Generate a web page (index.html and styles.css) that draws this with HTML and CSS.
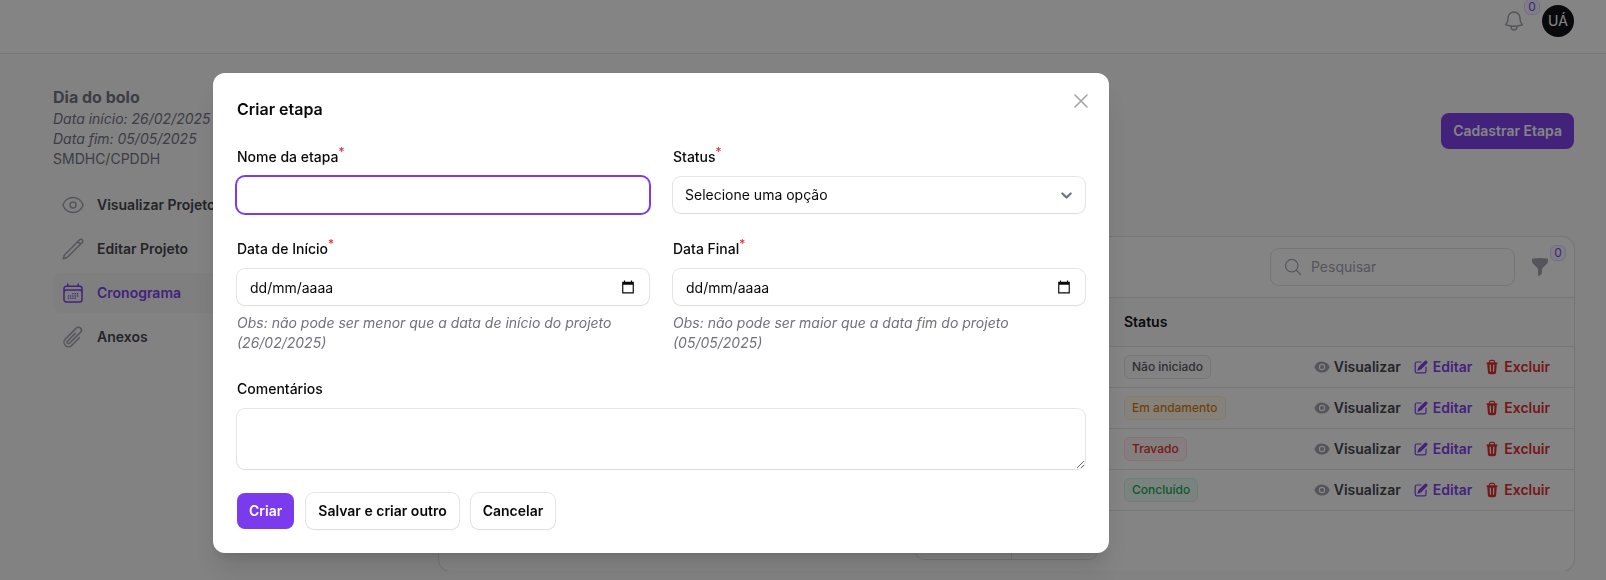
FILE: index.html
```html
<!DOCTYPE html>
<html lang="pt-BR">
<head>
<meta charset="utf-8">
<meta name="viewport" content="width=device-width, initial-scale=1">
<title>Cronograma</title>
<link rel="stylesheet" href="styles.css">
</head>
<body>
<svg class="sprite" aria-hidden="true">
  <symbol id="i-view" viewBox="0 0 20 20"><path d="M10 12.5a2.5 2.5 0 100-5 2.5 2.5 0 000 5z"/><path fill-rule="evenodd" d="M.664 10.59a1.651 1.651 0 010-1.186A10.004 10.004 0 0110 3c4.257 0 7.893 2.66 9.336 6.41.147.381.146.804 0 1.186A10.004 10.004 0 0110 17c-4.257 0-7.893-2.66-9.336-6.41zM14 10a4 4 0 11-8 0 4 4 0 018 0z"/></symbol>
  <symbol id="i-edit" viewBox="0 0 20 20"><path d="M5.433 13.917l1.262-3.155A4 4 0 017.58 9.42l6.92-6.918a2.121 2.121 0 013 3l-6.92 6.918c-.383.383-.84.685-1.343.886l-3.154 1.262a.5.5 0 01-.65-.65z"/><path d="M3.5 5.75c0-.69.56-1.25 1.25-1.25H10A.75.75 0 0010 3H4.75A2.75 2.75 0 002 5.75v9.5A2.75 2.75 0 004.75 18h9.5A2.75 2.75 0 0017 15.25V10a.75.75 0 00-1.5 0v5.25c0 .69-.56 1.25-1.25 1.25h-9.5c-.69 0-1.25-.56-1.25-1.25v-9.5z"/></symbol>
  <symbol id="i-trash" viewBox="0 0 20 20"><path fill-rule="evenodd" d="M8.75 1A2.75 2.75 0 006 3.75v.443c-.795.077-1.584.176-2.365.298a.75.75 0 10.23 1.482l.149-.022.841 10.518A2.75 2.75 0 007.596 19h4.807a2.75 2.75 0 002.742-2.53l.841-10.52.149.023a.75.75 0 00.23-1.482A41.03 41.03 0 0014 4.193V3.75A2.75 2.75 0 0011.25 1h-2.5zM10 4c.84 0 1.673.025 2.5.075V3.75c0-.69-.56-1.25-1.25-1.25h-2.5c-.69 0-1.25.56-1.25 1.25v.325C8.327 4.025 9.16 4 10 4zM8.58 7.72a.75.75 0 00-1.5.06l.3 7.5a.75.75 0 101.5-.06l-.3-7.5zm4.34.06a.75.75 0 10-1.5-.06l-.3 7.5a.75.75 0 101.5.06l.3-7.5z"/></symbol>
  <symbol id="i-date" viewBox="0 0 24 24"><path d="M22 3h-3V1h-2v2H7V1H5v2H2v20h20V3zm-2 18H4V8h16v13z"/></symbol>
</svg>

<header class="topbar">
  <button class="icon-btn" type="button" aria-label="Notificações">
    <svg class="icon-lg line" viewBox="0 0 24 24"><path d="M14.857 17.082a23.848 23.848 0 005.454-1.310A8.967 8.967 0 0118 9.750v-.7V9A6 6 0 006 9v.75a8.967 8.967 0 01-2.312 6.022c1.733.64 3.560 1.085 5.455 1.310m5.714 0a24.255 24.255 0 01-5.714 0m5.714 0a3 3 0 11-5.714 0"/></svg>
    <span class="count">0</span>
  </button>
  <button class="avatar" type="button">UÁ</button>
</header>

<div class="page">
  <aside class="sidebar">
    <h2 class="project-name">Dia do bolo</h2>
    <p class="project-line"><em>Data início: 26/02/2025</em></p>
    <p class="project-line"><em>Data fim: 05/05/2025</em></p>
    <p class="project-line">SMDHC/CPDDH</p>
    <nav class="nav">
      <a class="nav-item" href="#">
        <svg class="icon-lg line" viewBox="0 0 24 24"><path d="M2.036 12.322a1.012 1.012 0 010-.639C3.423 7.510 7.360 4.500 12 4.500c4.638 0 8.573 3.007 9.963 7.178.07.207.07.431 0 .639C20.577 16.490 16.640 19.500 12 19.500c-4.638 0-8.573-3.007-9.963-7.178z"/><path d="M15 12a3 3 0 11-6 0 3 3 0 016 0z"/></svg>
        Visualizar Projeto
      </a>
      <a class="nav-item" href="#">
        <svg class="icon-lg line" viewBox="0 0 24 24"><path d="M16.862 4.487l1.687-1.688a1.875 1.875 0 112.652 2.652L6.832 19.820a4.500 4.500 0 01-1.897 1.130l-2.685.8.8-2.685a4.500 4.500 0 011.130-1.897L16.863 4.487zm0 0L19.500 7.125"/></svg>
        Editar Projeto
      </a>
      <a class="nav-item active" href="#" aria-current="page">
        <svg class="icon-lg line" viewBox="0 0 24 24"><path d="M6.75 3v2.250M17.250 3v2.250M3 18.750V7.500a2.250 2.250 0 012.250-2.250h13.500A2.250 2.250 0 0121 7.500v11.250m-18 0A2.250 2.250 0 005.250 21h13.500A2.250 2.250 0 0021 18.750m-18 0v-7.500A2.250 2.250 0 015.250 9h13.500A2.250 2.250 0 0121 11.250v7.500m-9-6h.008v.008H12v-.008zM12 15h.008v.008H12V15zm0 2.250h.008v.008H12v-.008zM9.750 15h.008v.008H9.750V15zm0 2.250h.008v.008H9.750v-.008zM7.500 15h.008v.008H7.500V15zm0 2.250h.008v.008H7.500v-.008zm6.750-4.500h.008v.008h-.008v-.008zm0 2.250h.008v.008h-.008V15zm0 2.250h.008v.008h-.008v-.008zm2.250-4.500h.008v.008H16.500v-.008zm0 2.250h.008v.008H16.500V15z"/></svg>
        Cronograma
      </a>
      <a class="nav-item" href="#">
        <svg class="icon-lg line" viewBox="0 0 24 24"><path d="M18.375 12.739l-7.693 7.693a4.500 4.500 0 01-6.364-6.364l10.940-10.940A3 3 0 1119.500 7.372L8.552 18.320m.009-.01l-.01.01m5.699-9.941l-7.810 7.810a1.500 1.500 0 002.112 2.130"/></svg>
        Anexos
      </a>
    </nav>
  </aside>

  <main class="main">
    <div class="page-head">
      <button class="btn primary" type="button">Cadastrar Etapa</button>
    </div>
    <section class="card">
      <div class="toolbar">
        <label class="search">
          <svg class="icon line" viewBox="0 0 24 24" aria-hidden="true"><path d="M21 21l-5.197-5.197m0 0A7.500 7.500 0 105.196 5.196a7.500 7.500 0 0010.607 10.607z"/></svg>
          <input type="search" placeholder="Pesquisar" aria-label="Pesquisar">
        </label>
        <button class="icon-btn" type="button" aria-label="Filtrar">
          <svg class="icon solid" viewBox="0 0 20 20"><path d="M2.628 1.601C5.028 1.206 7.490 1 10 1s4.973.206 7.372.601a.75.75 0 01.628.74v2.288a2.250 2.250 0 01-.659 1.590l-4.682 4.683a2.250 2.250 0 00-.659 1.590v3.037c0 .684-.31 1.330-.844 1.757l-1.937 1.550A.75.75 0 018 18.250v-5.757a2.250 2.250 0 00-.659-1.591L2.659 6.220A2.250 2.250 0 012 4.629V2.340a.75.75 0 01.628-.74z"/></svg>
          <span class="count">0</span>
        </button>
      </div>
      <table class="table">
        <thead>
          <tr><td></td><th class="col-status" scope="col">Status</th><td class="col-actions"></td></tr>
        </thead>
        <tbody>
          <tr><td></td><td><span class="badge gray">Não iniciado</span></td><td><div class="actions"><a class="action" href="#"><svg><use href="#i-view"/></svg>Visualizar</a><a class="action edit" href="#"><svg><use href="#i-edit"/></svg>Editar</a><button class="action delete" type="button"><svg><use href="#i-trash"/></svg>Excluir</button></div></td></tr>
          <tr><td></td><td><span class="badge warning">Em andamento</span></td><td><div class="actions"><a class="action" href="#"><svg><use href="#i-view"/></svg>Visualizar</a><a class="action edit" href="#"><svg><use href="#i-edit"/></svg>Editar</a><button class="action delete" type="button"><svg><use href="#i-trash"/></svg>Excluir</button></div></td></tr>
          <tr><td></td><td><span class="badge danger">Travado</span></td><td><div class="actions"><a class="action" href="#"><svg><use href="#i-view"/></svg>Visualizar</a><a class="action edit" href="#"><svg><use href="#i-edit"/></svg>Editar</a><button class="action delete" type="button"><svg><use href="#i-trash"/></svg>Excluir</button></div></td></tr>
          <tr><td></td><td><span class="badge success">Concluído</span></td><td><div class="actions"><a class="action" href="#"><svg><use href="#i-view"/></svg>Visualizar</a><a class="action edit" href="#"><svg><use href="#i-edit"/></svg>Editar</a><button class="action delete" type="button"><svg><use href="#i-trash"/></svg>Excluir</button></div></td></tr>
        </tbody>
      </table>
      <div class="pagination"><div class="page-size"><span></span><span></span></div></div>
    </section>
  </main>
</div>

<div class="overlay">
  <form class="modal" role="dialog" aria-modal="true" aria-labelledby="modal-title">
    <button class="close" type="button" aria-label="Fechar"><svg class="icon-lg line" viewBox="0 0 24 24"><path d="M6 18L18 6M6 6l12 12"/></svg></button>
    <h1 class="modal-title" id="modal-title">Criar etapa</h1>
    <div class="fields">
      <div class="field">
        <label for="nome">Nome da etapa<sup>*</sup></label>
        <div class="control focused"><input id="nome" type="text"></div>
      </div>
      <div class="field">
        <label for="status">Status<sup>*</sup></label>
        <div class="control">
          <select id="status"><option>Selecione uma opção</option></select>
          <svg class="chevron" viewBox="0 0 20 20" aria-hidden="true"><path d="M6 8l4 4 4-4"/></svg>
        </div>
      </div>
      <div class="field">
        <label for="inicio">Data de Início<sup>*</sup></label>
        <div class="control date">
          <input id="inicio" type="text" placeholder="dd/mm/aaaa">
          <button type="button" aria-label="Abrir calendário"><svg><use href="#i-date"/></svg></button>
        </div>
        <p class="hint">Obs: não pode ser menor que a data de início do projeto (26/02/2025)</p>
      </div>
      <div class="field">
        <label for="final">Data Final<sup>*</sup></label>
        <div class="control date">
          <input id="final" type="text" placeholder="dd/mm/aaaa">
          <button type="button" aria-label="Abrir calendário"><svg><use href="#i-date"/></svg></button>
        </div>
        <p class="hint">Obs: não pode ser maior que a data fim do projeto (05/05/2025)</p>
      </div>
      <div class="field wide">
        <label for="comentarios">Comentários</label>
        <div class="control"><textarea id="comentarios" rows="2"></textarea></div>
      </div>
    </div>
    <div class="modal-actions">
      <button class="btn primary" type="submit">Criar</button>
      <button class="btn outline" type="button">Salvar e criar outro</button>
      <button class="btn outline" type="button">Cancelar</button>
    </div>
  </form>
</div>
</body>
</html>
```

FILE: styles.css
```css
:root {
  --primary: #7c3aed;
  --gray-50: #fafafa;
  --gray-100: #f4f4f5;
  --gray-200: #e4e4e7;
  --gray-400: #a1a1aa;
  --gray-500: #71717a;
  --gray-700: #3f3f46;
  --gray-950: #09090b;
}

*, *::before, *::after { box-sizing: border-box; }

body {
  margin: 0;
  background: var(--gray-50);
  color: var(--gray-950);
  font: 14px/20px Inter, "Liberation Sans", sans-serif;
}

h1, h2, p { margin: 0; }
a { color: inherit; text-decoration: none; }
button, input, select, textarea { font: inherit; color: inherit; }
button { padding: 0; border: 0; background: none; cursor: pointer; }
svg { display: block; flex: none; fill: currentColor; }

.sprite { position: absolute; width: 0; height: 0; }
.icon { width: 20px; height: 20px; }
.icon-lg { width: 24px; height: 24px; }
.line {
  fill: none;
  stroke: currentColor;
  stroke-width: 1.5;
  stroke-linecap: round;
  stroke-linejoin: round;
}

/* Top bar */
.topbar {
  display: flex;
  align-items: center;
  justify-content: flex-end;
  gap: 16px;
  padding: 5px 32px 16px;
  background: #fff;
  box-shadow: 0 1px 0 rgba(9, 9, 11, .08);
}
.icon-btn { position: relative; color: var(--gray-400); }
.count {
  position: absolute;
  bottom: 100%;
  left: 100%;
  width: 16px;
  height: 16px;
  margin: 0 0 -6px -2px;
  border: 1px solid #e0d4fa;
  border-radius: 6px;
  background: #f5f3ff;
  color: var(--primary);
  font-size: 12px;
  line-height: 14px;
  text-align: center;
}
.toolbar .count { margin: 0 0 -4px 0; }
.avatar {
  width: 32px;
  height: 32px;
  border-radius: 50%;
  background: var(--gray-950);
  color: #fff;
}

/* Page */
.page {
  display: grid;
  grid-template-columns: 354px minmax(0, 1fr);
  gap: 32px;
  padding: 32px 32px 0 53px;
}
.project-name { font-size: 16px; line-height: 24px; font-weight: 700; color: var(--gray-500); }
.project-line { color: var(--gray-500); }
.nav { display: flex; flex-direction: column; gap: 4px; margin-top: 16px; }
.nav-item {
  display: flex;
  align-items: center;
  gap: 12px;
  padding: 8px;
  border-radius: 8px;
  color: var(--gray-700);
  font-weight: 600;
}
.nav-item svg { color: var(--gray-400); }
.nav-item.active { background: var(--gray-100); color: var(--primary); }
.nav-item.active svg { color: var(--primary); }

.page-head { display: flex; justify-content: flex-end; padding: 28px 0 88px; }

.btn { padding: 8px 12px; border-radius: 8px; font-weight: 600; }
.btn.primary { background: var(--primary); color: #fff; }
.btn.outline { background: #fff; box-shadow: 0 0 0 1px rgba(9, 9, 11, .1), 0 1px 2px rgba(0, 0, 0, .05); }

.card {
  border-radius: 12px;
  background: #fff;
  box-shadow: 0 0 0 1px rgba(9, 9, 11, .09), 0 1px 2px rgba(0, 0, 0, .05);
}
.toolbar { display: flex; align-items: center; justify-content: flex-end; gap: 16px; padding: 12px 24px; }
.search {
  display: flex;
  align-items: center;
  gap: 8px;
  width: 243px;
  padding: 8px 12px;
  border-radius: 8px;
  box-shadow: 0 0 0 1px rgba(9, 9, 11, .12);
  color: var(--gray-400);
}
.search input { width: 100%; min-width: 0; height: 20px; padding: 0; border: 0; outline: 0; background: none; }
.search input::placeholder { color: var(--gray-400); opacity: 1; }

.table { width: 100%; table-layout: fixed; border-collapse: separate; border-spacing: 0; }
.table th, .table td { height: 41px; padding: 0 12px; border-top: 1px solid var(--gray-200); text-align: left; }
.table thead th, .table thead td { height: 49px; background: var(--gray-50); font-weight: 600; }
.table tbody tr:last-child td { height: 42px; border-bottom: 1px solid var(--gray-200); }
.table td:last-child { padding-right: 24px; }
.col-status { width: 190px; }
.col-actions { width: 272px; }

.badge {
  display: inline-block;
  padding: 3px 7px;
  border: 1px solid;
  border-radius: 6px;
  font-size: 12px;
  font-weight: 500;
  line-height: 16px;
  vertical-align: middle;
}
.badge.gray { background: #fafafa; color: #52525b; border-color: #e5e5e7; }
.badge.warning { background: #fffbeb; color: #d97706; border-color: #fbeed4; }
.badge.danger { background: #fef2f2; color: #dc2626; border-color: #fadede; }
.badge.success { background: #ecfdf5; color: #16a34a; border-color: #d5f2e1; }

.actions { display: flex; justify-content: flex-end; gap: 12px; }
.action { display: flex; align-items: center; gap: 4px; color: var(--gray-700); font-weight: 600; }
.action svg { width: 16px; height: 16px; color: var(--gray-400); }
.action.edit, .action.edit svg { color: var(--primary); }
.action.delete, .action.delete svg { color: #dc2626; }

.pagination { display: flex; justify-content: center; padding: 12px; }
.page-size {
  display: grid;
  grid-template-columns: 95px 86px;
  height: 36px;
  border-radius: 8px;
  box-shadow: 0 0 0 1px rgba(9, 9, 11, .12);
}
.page-size span + span { border-left: 1px solid var(--gray-200); }

/* Modal */
.overlay {
  position: fixed;
  inset: 0;
  display: flex;
  align-items: flex-start;
  justify-content: center;
  padding: 73px 284px 0 0;
  background: rgba(9, 9, 11, .5);
}
.modal {
  position: relative;
  display: flex;
  flex-direction: column;
  gap: 24px;
  width: 100%;
  max-width: 896px;
  padding: 24px;
  border-radius: 12px;
  background: #fff;
  box-shadow: 0 20px 25px -5px rgba(0, 0, 0, .1), 0 8px 10px -6px rgba(0, 0, 0, .1);
}
.close { position: absolute; top: 16px; right: 16px; color: var(--gray-400); }
.modal-title { font-size: 16px; line-height: 24px; font-weight: 600; }
.fields { display: grid; grid-template-columns: repeat(2, minmax(0, 1fr)); gap: 24px; }
.field { display: flex; flex-direction: column; gap: 8px; }
.field.wide { grid-column: 1 / -1; }
.field label { line-height: 24px; font-weight: 500; }
.field sup { color: #dc2626; font-size: 12px; line-height: 0; font-weight: 400; }
.control {
  position: relative;
  display: flex;
  border-radius: 8px;
  background: #fff;
  box-shadow: 0 0 0 1px rgba(9, 9, 11, .1), 0 1px 2px rgba(0, 0, 0, .05);
}
.control.focused { box-shadow: 0 0 0 2px var(--primary); }
.control input, .control select, .control textarea {
  width: 100%;
  min-width: 0;
  height: 36px;
  padding: 8px 12px;
  border: 0;
  border-radius: 8px;
  outline: 0;
  background: none;
  appearance: none;
}
.control textarea { display: block; height: 60px; resize: vertical; }
.chevron {
  position: absolute;
  top: 8px;
  right: 8px;
  width: 21px;
  height: 21px;
  fill: none;
  stroke: #6b7280;
  stroke-width: 2;
  stroke-linecap: round;
  stroke-linejoin: round;
  pointer-events: none;
}
.date { align-items: center; padding-right: 14px; }
.date input { padding-left: 13px; }
.date input::placeholder { color: var(--gray-950); opacity: 1; }
.date svg { width: 14px; height: 14px; }
.hint { color: var(--gray-500); font-style: italic; }
.modal-actions { display: flex; gap: 12px; }
```
